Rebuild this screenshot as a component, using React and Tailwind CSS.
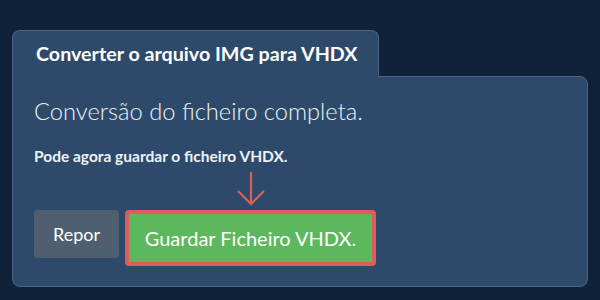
import React from "react";

const App = () => {
  return (
    <div
      className="w-[600px] h-[300px] bg-[#0f2239] pt-[30px] pl-[12px]"
      style={{ fontFamily: "Lato, 'Open Sans', sans-serif" }}
    >
      <div className="relative z-10 -mb-px w-[367px] h-[47px] bg-[#2d4a6b] border border-b-0 border-[#4a6788] rounded-t-lg pl-[23px] pt-[11px]">
        <h2 className="text-[19.7px] font-bold text-white leading-[24px]">
          Converter o arquivo IMG para VHDX
        </h2>
      </div>
      <div className="w-[576px] h-[211px] bg-[#2d4a6b] border border-[#4a6788] rounded-b-lg rounded-tr-lg pl-[21px] pt-[20px]">
        <p className="text-[23.7px] font-light text-[#eef2f6] leading-[29px]">
          Conversão do ficheiro completa.
        </p>
        <p className="mt-[21px] text-[15.5px] font-bold text-[#eef2f6] leading-[19px]">
          Pode agora guardar o ficheiro VHDX.
        </p>
        <div className="mt-[44px] flex items-start gap-[6px]">
          <button className="w-[85px] h-[48px] bg-[#4f5f70] rounded text-[18px] text-white">
            Repor
          </button>
          <div className="relative">
            <svg
              className="absolute left-1/2 -translate-x-1/2 -top-[38px]"
              width="32"
              height="34"
              viewBox="0 0 32 34"
            >
              <path
                d="M16 0 L16 32 M3 19 L16 32 L29 19"
                fill="none"
                stroke="#e05c58"
                strokeWidth="2.2"
              />
            </svg>
            <button className="w-[251px] h-[56px] bg-[#5cb85c] border-4 border-[#e05c58] rounded text-[20px] text-white">
              Guardar Ficheiro VHDX.
            </button>
          </div>
        </div>
      </div>
    </div>
  );
};

export default App;
